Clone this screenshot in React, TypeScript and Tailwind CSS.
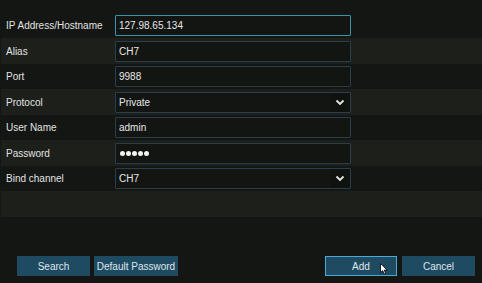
import { ReactNode } from 'react'

interface Row {
  label: string
  value: string
  kind?: 'text' | 'select' | 'password'
  focused?: boolean
  h: string
  stripe: boolean
}

const rows: Row[] = [
  { label: 'IP Address/Hostname', value: '127.98.65.134', focused: true, h: 'h-[26px]', stripe: false },
  { label: 'Alias', value: 'CH7', h: 'h-[26px]', stripe: true },
  { label: 'Port', value: '9988', h: 'h-[25px]', stripe: false },
  { label: 'Protocol', value: 'Private', kind: 'select', h: 'h-[26px]', stripe: true },
  { label: 'User Name', value: 'admin', h: 'h-[25px]', stripe: false },
  { label: 'Password', value: '', kind: 'password', h: 'h-[26px]', stripe: true },
  { label: 'Bind channel', value: 'CH7', kind: 'select', h: 'h-[25px]', stripe: false },
]

function Chevron() {
  return (
    <svg width="10" height="7" viewBox="0 0 10 7" className="block">
      <path d="M1.5 1.5 L5 5 L8.5 1.5" fill="none" stroke="#e6e6e6" strokeWidth="1.8" />
    </svg>
  )
}

function Field({ row }: { row: Row }) {
  const border = row.focused ? 'border-[#3a93a9]' : 'border-[#283e4c]'
  return (
    <div className={`flex h-[21px] w-[236px] items-center border ${border} bg-[#121511] rounded-[1px]`}>
      {row.kind === 'password' ? (
        <div className="flex gap-[1px] pl-[4px]">
          {[0, 1, 2, 3, 4].map(i => (
            <span key={i} className="block h-[5px] w-[5px] rounded-full bg-[#f2f2f2]" />
          ))}
        </div>
      ) : (
        <span className="flex-1 pl-[3px] text-[10px] text-[#e8e8e8]">{row.value}</span>
      )}
      {row.kind === 'select' && (
        <div className="flex h-full w-[20px] items-center justify-center bg-[#0f120f]">
          <Chevron />
        </div>
      )}
    </div>
  )
}

function Button({ children, active, w }: { children: ReactNode; active?: boolean; w: string }) {
  return (
    <div
      className={`flex h-[20px] ${w} items-center justify-center bg-[#1e4a62] text-[10px] text-[#dfe6ea] ${
        active ? 'border border-[#4aa9d6]' : ''
      }`}
    >
      {children}
    </div>
  )
}

export default function App() {
  return (
    <div
      className="relative h-[283px] w-[482px] overflow-hidden bg-[#131612]"
      style={{ fontFamily: '"Liberation Sans", Arial, sans-serif' }}
    >
      <div className="h-[12px]" />
      {rows.map(row => (
        <div
          key={row.label}
          className={`ml-px flex ${row.h} items-center ${row.stripe ? 'bg-[#1d1f1b]' : ''}`}
        >
          <span className="w-[114px] pl-[5px] text-[10px] text-[#e2e2e2]">{row.label}</span>
          <Field row={row} />
        </div>
      ))}
      <div className="ml-px h-[26px] bg-[#1d1f1b]" />

      <div className="mt-[39px] flex items-center px-[17px]">
        <div className="flex gap-[4px]">
          <Button w="w-[73px]">Search</Button>
          <Button w="w-[84px]">Default Password</Button>
        </div>
        <div className="ml-auto mr-[-10px] flex gap-[5px]">
          <Button w="w-[72px]" active>
            Add
          </Button>
          <Button w="w-[73px]">Cancel</Button>
        </div>
      </div>

      <svg
        className="absolute left-[380px] top-[263px]"
        width="8"
        height="12"
        viewBox="0 0 8 12"
      >
        <path d="M0.5 0.5 L0.5 9.5 L2.7 7.6 L4.3 11 L5.7 10.4 L4.2 7.1 L7.2 7.1 Z" fill="#ffffff" stroke="#000" strokeWidth="0.8" />
      </svg>
    </div>
  )
}
